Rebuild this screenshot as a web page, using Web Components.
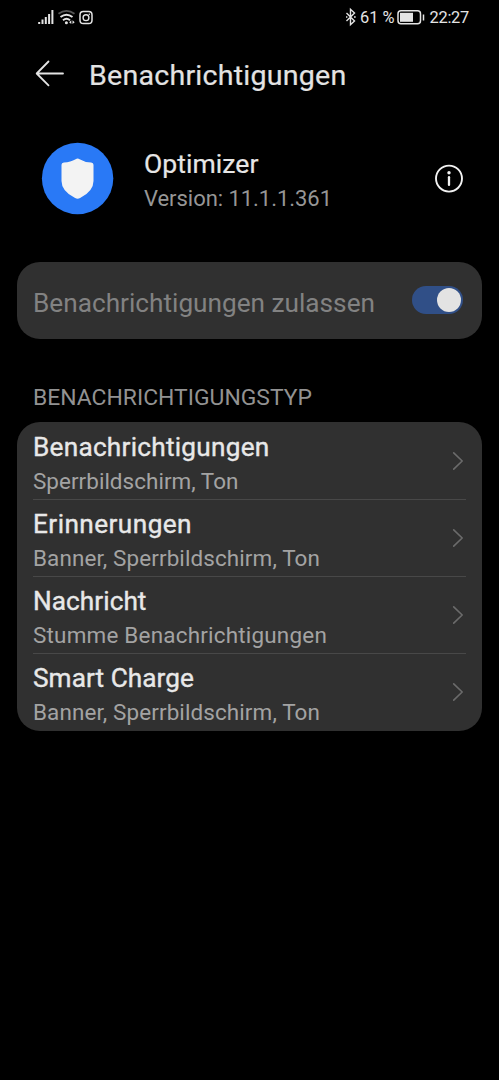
<!DOCTYPE html>
<html lang="de">
<head>
<meta charset="utf-8">
<title>Benachrichtigungen</title>
<style>
html,body{margin:0;background:#000;height:1080px;overflow:hidden}
body{font-family:Roboto,"Open Sans",sans-serif;color:#e6e6e6}
</style>
</head>
<body>
<settings-page></settings-page>
<script>
function define(name, html) {
  customElements.define(name, class extends HTMLElement {
    constructor() {
      super();
      this.attachShadow({ mode: 'open' }).innerHTML = html;
    }
  });
}

/* One line of text, slightly widened, whose tracking is spread to an exact width. */
customElements.define('text-line', class extends HTMLElement {
  connectedCallback() {
    const root = this.shadowRoot || this.attachShadow({ mode: 'open' });
    root.innerHTML = `<style>:host{display:block;line-height:30px;height:30px;white-space:pre}span{display:inline-block;transform-origin:0 50%}</style><span></span>`;
    const span = root.querySelector('span');
    span.textContent = this.getAttribute('text');
    this.style.fontSize = this.getAttribute('size') + 'px';
    const target = Number(this.getAttribute('fit'));
    const natural = span.getBoundingClientRect().width;
    const stretch = Math.max(1, Math.min(1.04, target / natural));
    this.style.width = target + 'px';
    span.style.letterSpacing = (target / stretch - natural) / span.textContent.length + 'px';
    span.style.transform = `scaleX(${stretch})`;
  }
});

define('status-bar', `<style>
:host{display:flex;height:36px;box-sizing:border-box;padding:0 30px 0 37px;justify-content:space-between}
div{display:flex}svg{display:block;fill:none;stroke:#e4e4e4}
text-line{margin-top:3px;color:#e4e4e4}
</style>
<div><svg width="60" height="36" viewBox="37 0 60 36">
<path d="M39.2 22v2M42.5 19.5V24M45.8 17v7M49.1 14v10M52.4 10v14" stroke-width="2"/>
<path d="M58.5 13.8q8-6 16 0" stroke="#555" stroke-width="1.7"/><path d="M60.5 17q6-4.6 12 0M63 20.2q3.5-2.8 7 0" stroke-width="2"/>
<circle cx="66.4" cy="22.7" r="1.5" fill="#e4e4e4" stroke="none"/><path d="M71.300 20.300v3.700l-2.200-1.850zM72.500 20.300v3.700l2.200-1.850z" fill="#e4e4e4" stroke="none"/>
<rect x="80" y="11.600" width="12" height="12" rx="3.300" stroke-width="1.500"/><circle cx="86" cy="17.700" r="2.900" stroke-width="1.400"/><circle cx="89.300" cy="14.200" r=".8" fill="#e4e4e4" stroke="none"/>
</svg></div>
<div><svg width="15" height="36" viewBox="345 0 15 36"><path d="M346.500 13l8 8-4 3.700V9.300l4 3.700-8 8" stroke-width="1.400"/><path d="M346 17h1.400M354 17h1.700" stroke-width="1.500"/></svg>
<text-line text="61 %" size="16.400" fit="34.500"></text-line>
<svg width="35" height="36" viewBox="394.500 0 35 36"><rect x="397.500" y="10.800" width="22.500" height="13" rx="3" stroke-width="1.500"/><path d="M399.500 12.800h13v9h-13z" fill="#e4e4e4" stroke="none"/><path d="M423 14.500v6" stroke-width="1.500"/></svg>
<text-line text="22:27" size="16.400" fit="39.500"></text-line></div>`);

define('page-header', `<style>
:host{display:flex;height:74px;padding-left:34px;box-sizing:border-box}
svg{display:block;width:55px;height:74px}text-line{margin-top:25px;color:#e3e3e3;-webkit-text-stroke:.2px #e3e3e3}
</style>
<svg viewBox="34 36 55 74" fill="none" stroke="#e4e4e4" stroke-width="1.800" stroke-linecap="round" stroke-linejoin="round"><path d="M63 73.500H37M48.500 61.500L36.700 73.500L48.500 85.300"/></svg>
<text-line text="Benachrichtigungen" size="27.500" fit="257.500"></text-line>`);

define('app-summary', `<style>
:host{display:flex;height:152px;padding:0 35px 0 41px;box-sizing:border-box}
svg{display:block}.app{margin:32px 0 0;width:73px;height:73px}
.names{padding:39px 0 0 30px;flex:1}.names text-line{-webkit-text-stroke:.2px #e6e6e6}.names text-line+text-line{margin-top:5px;color:#969696;-webkit-text-stroke:0}
.info{width:30px;height:30px;margin-top:54px}
</style>
<svg class="app" viewBox="41 142 73 73"><circle cx="77.600" cy="178.500" r="35.700" fill="#2979f6"/><path d="M77.600 158.400q1 0 2 .8 5 3.100 11.500 3.200 2.400.2 2.400 2.400V181q0 10.300-13.400 17.100-2.500 1.300-5 0Q61.500 191.300 61.500 181V164.800q0-2.200 2.400-2.400 6.700-.1 11.700-3.200 1-.8 2-.8z" fill="#f3f3f3"/></svg>
<div class="names"><text-line text="Optimizer" size="25.500" fit="114.500"></text-line><text-line text="Version: 11.1.1.361" size="22" fit="188"></text-line></div>
<svg class="info" viewBox="0 0 30 30" fill="none" stroke="#f2f2f2"><circle cx="15" cy="14.600" r="13" stroke-width="1.900"/><path d="M15 13.200v7.700" stroke-width="2.300" stroke-linecap="round"/><circle cx="15" cy="8.700" r="1.700" fill="#f2f2f2" stroke="none"/></svg>`);

define('toggle-switch', `<style>
:host{display:flex;box-sizing:border-box;width:51px;height:28px;border-radius:14px;background:#304f87;padding:2px 2.500px;justify-content:flex-end}
i{width:24px;height:24px;border-radius:50%;background:#e3e3e3}
</style><i></i>`);

define('allow-card', `<style>
:host{display:flex;margin:0 17px;height:77px;border-radius:23px;background:#303030;padding:0 19px 0 16px;box-sizing:border-box;justify-content:space-between}
text-line{margin-top:26px;color:#828282}toggle-switch{margin-top:24px}
</style><text-line text="Benachrichtigungen zulassen" size="26" fit="342"></text-line><toggle-switch></toggle-switch>`);

define('section-title', `<style>:host{display:block;height:83px;box-sizing:border-box;padding:43px 0 0 33px;color:#929292}</style>
<text-line text="BENACHRICHTIGUNGSTYP" size="22.500" fit="279"></text-line>`);

define('card-list', `<style>:host{display:block;margin:0 17px;border-radius:23px;background:#303030;height:309px;overflow:hidden}</style><slot></slot>`);

customElements.define('type-row', class extends HTMLElement {
  connectedCallback() {
    const a = n => this.getAttribute(n);
    this.attachShadow({ mode: 'open' }).innerHTML = `<style>
:host{display:flex;height:77px;margin:0 16px;box-sizing:border-box;border-top:1px solid #484848;justify-content:space-between}
:host(:first-of-type){border-top-color:transparent}
.names{padding-top:10px}.names text-line{color:#e8e8e8;-webkit-text-stroke:.35px #e8e8e8}.names text-line+text-line{margin-top:4px;color:#a3a3a3;-webkit-text-stroke:0}
svg{display:block;width:12px;height:20px;margin:28px 2px 0 0}
</style><div class="names"><text-line text="${a('name')}" size="25.200" fit="${a('name-fit')}"></text-line><text-line text="${a('detail')}" size="21.600" fit="${a('detail-fit')}"></text-line></div>
<svg viewBox="0 0 12 20" fill="none" stroke="#6b6b6b" stroke-width="1.600" stroke-linecap="round" stroke-linejoin="round"><path d="M1.700 1.800L10.200 10L1.700 18.200"/></svg>`;
  }
});

define('settings-page', `<style>:host{display:block;width:499px;height:1080px;background:#000}</style>
<status-bar></status-bar><page-header></page-header><app-summary></app-summary><allow-card></allow-card><section-title></section-title>
<card-list>
<type-row name="Benachrichtigungen" name-fit="236.500" detail="Sperrbildschirm, Ton" detail-fit="205.500"></type-row>
<type-row name="Erinnerungen" name-fit="159" detail="Banner, Sperrbildschirm, Ton" detail-fit="287"></type-row>
<type-row name="Nachricht" name-fit="113.500" detail="Stumme Benachrichtigungen" detail-fit="294"></type-row>
<type-row name="Smart Charge" name-fit="161" detail="Banner, Sperrbildschirm, Ton" detail-fit="287"></type-row>
</card-list>`);
</script>
</body>
</html>
